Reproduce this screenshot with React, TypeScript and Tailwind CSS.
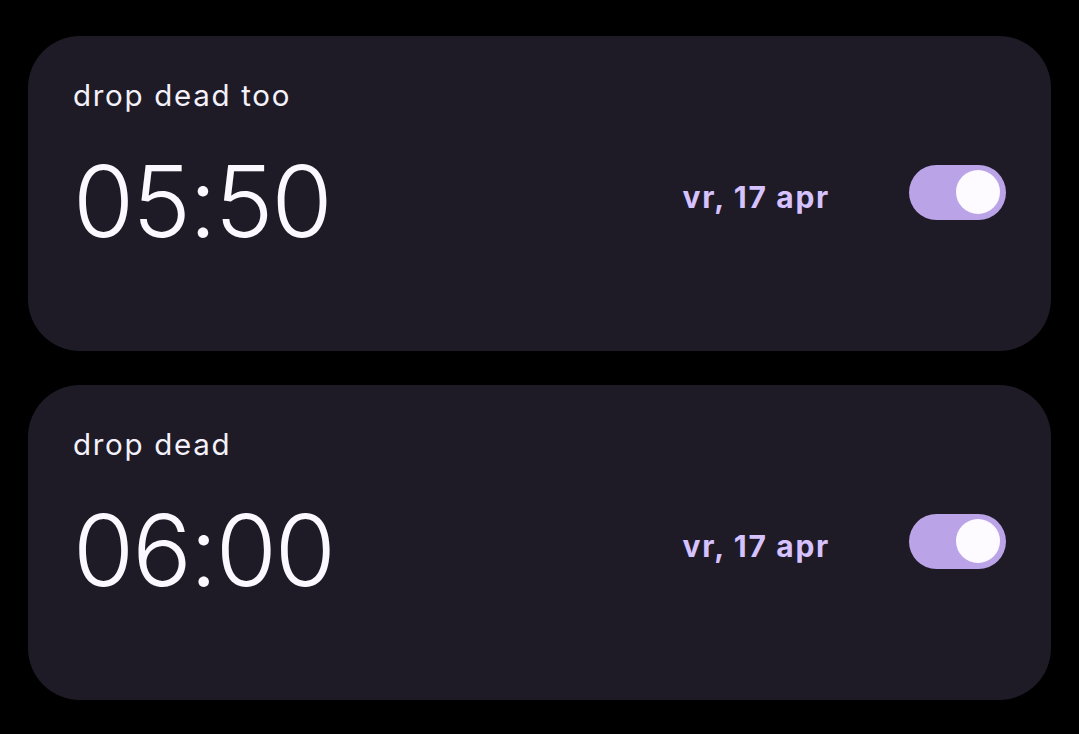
import React from 'react';

type Alarm = {
  label: string;
  time: string;
  date: string;
  on: boolean;
};

const alarms: Alarm[] = [
  { label: 'drop dead too', time: '05:50', date: 'vr, 17 apr', on: true },
  { label: 'drop dead', time: '06:00', date: 'vr, 17 apr', on: true },
];

function Toggle({ on }: { on: boolean }) {
  return (
    <div
      className={`flex h-[55px] w-[97px] items-center rounded-full px-[6px] ${
        on ? 'justify-end bg-[#bba3e8]' : 'justify-start bg-[#3a3546]'
      }`}
    >
      <div className="h-[44px] w-[44px] rounded-full bg-[#fdfbff]" />
    </div>
  );
}

function AlarmCard({ alarm }: { alarm: Alarm }) {
  return (
    <div className="flex h-[315px] flex-col rounded-[52px] bg-[#1e1b27] pl-[45px] pr-[45px] pt-[37px]">
      <div className="text-[29.5px] leading-[44px] tracking-[1.7px] text-[#f4f1fa]">{alarm.label}</div>
      <div className="mt-[29px] flex items-center">
        <div className="flex-1 text-[99px] font-light leading-[110px] tracking-[-2px] text-[#fbf9ff]">
          {alarm.time}
        </div>
        <div className="mr-[79px] -mt-[8px] text-[30px] font-bold tracking-[1.7px] text-[#d6c2ff]">
          {alarm.date}
        </div>
        <div className="-mt-[18px]">
          <Toggle on={alarm.on} />
        </div>
      </div>
    </div>
  );
}

export default function App() {
  return (
    <div
      className="flex h-[734px] w-full flex-col gap-[34px] bg-black px-[28px] pt-[36px]"
      style={{ fontFamily: 'Inter, "Noto Sans", sans-serif' }}
    >
      {alarms.map((a) => (
        <AlarmCard key={a.label} alarm={a} />
      ))}
    </div>
  );
}
